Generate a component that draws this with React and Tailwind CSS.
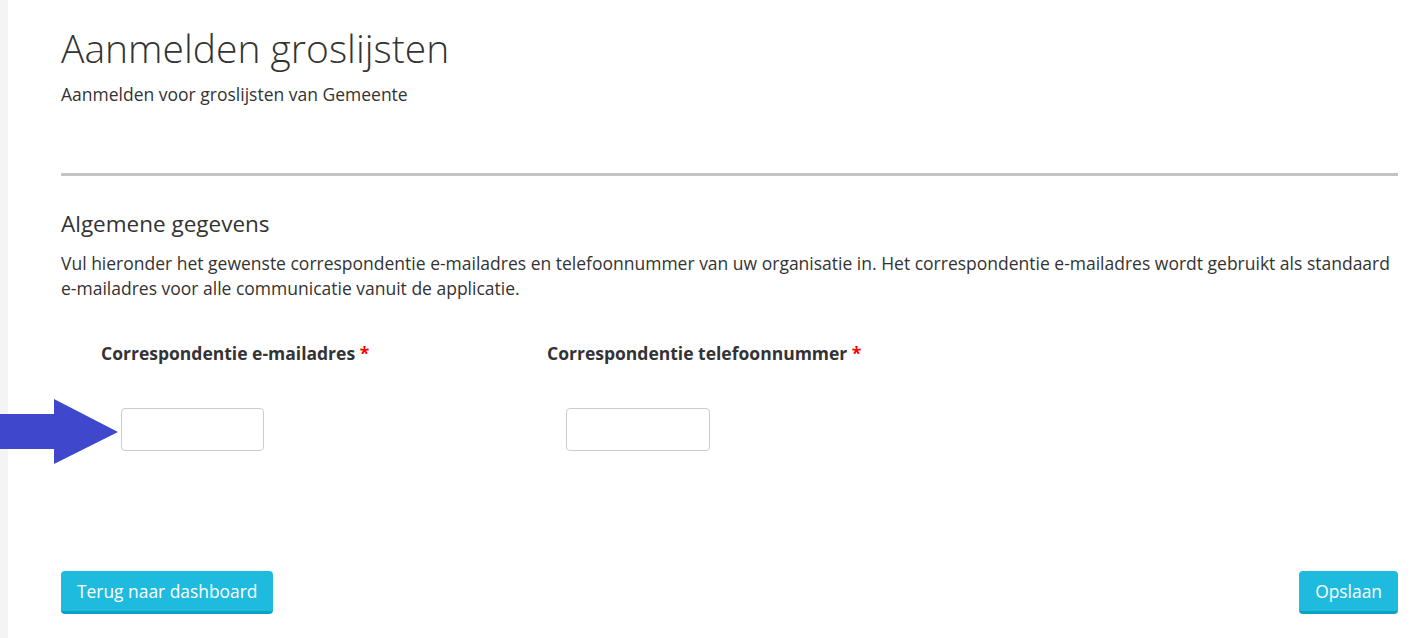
export default function App() {
  return (
    <div className="flex min-h-[638px] bg-white text-[#333] font-['Open_Sans',sans-serif]">
      <div className="w-[8px] shrink-0 bg-[#f4f4f4]" />
      <main className="relative flex-1 pl-[53px] pr-[13px]">
        <h1 className="mt-[26px] text-[39px] leading-[44px] font-light text-[#333]">Aanmelden groslijsten</h1>
        <p className="mt-[12px] text-[17.5px] leading-[24px]">Aanmelden voor groslijsten van Gemeente</p>
        <hr className="mt-[67px] border-0 h-[3px] bg-[#c4c4c4]" />

        <h2 className="mt-[33px] text-[22.5px] leading-[30px] font-normal">Algemene gegevens</h2>
        <p className="mt-[12px] text-[17.5px] leading-[25px]">
          Vul hieronder het gewenste correspondentie e-mailadres en telefoonnummer van uw organisatie in. Het correspondentie e-mailadres wordt gebruikt als standaard e-mailadres voor alle communicatie vanuit de applicatie.
        </p>

        <div className="mt-[40px] flex pl-[40px]">
          <div className="w-[446px]">
            <label className="block text-[17.5px] leading-[24px] font-bold">
              Correspondentie e-mailadres <span className="text-[#ff0000]">*</span>
            </label>
            <input type="email" className="mt-[43px] ml-[20px] block w-[143px] h-[43px] rounded-[4px] border border-[#cccccc] bg-white px-2 outline-none" />
          </div>
          <div>
            <label className="block text-[17.5px] leading-[24px] font-bold">
              Correspondentie telefoonnummer <span className="text-[#ff0000]">*</span>
            </label>
            <input type="tel" className="mt-[43px] ml-[19px] block w-[144px] h-[43px] rounded-[4px] border border-[#cccccc] bg-white px-2 outline-none" />
          </div>
        </div>

        <div className="mt-[120px] flex justify-between">
          <button className="h-[43px] rounded-[4px] border-b-[3px] border-[#0aa3c5] bg-[#1fbbdf] px-[16px] text-[17.4px] text-white">
            Terug naar dashboard
          </button>
          <button className="h-[43px] rounded-[4px] border-b-[3px] border-[#0aa3c5] bg-[#1fbbdf] px-[16px] text-[17.4px] text-white">
            Opslaan
          </button>
        </div>
      </main>

      {/* annotation arrow drawn over the page */}
      <svg className="absolute left-0 top-[399px]" width="120" height="66" viewBox="0 0 120 66">
        <polygon points="0,15 54,15 54,0 118,33 54,65 54,50 0,50" fill="#3f48cc" />
      </svg>
    </div>
  );
}
